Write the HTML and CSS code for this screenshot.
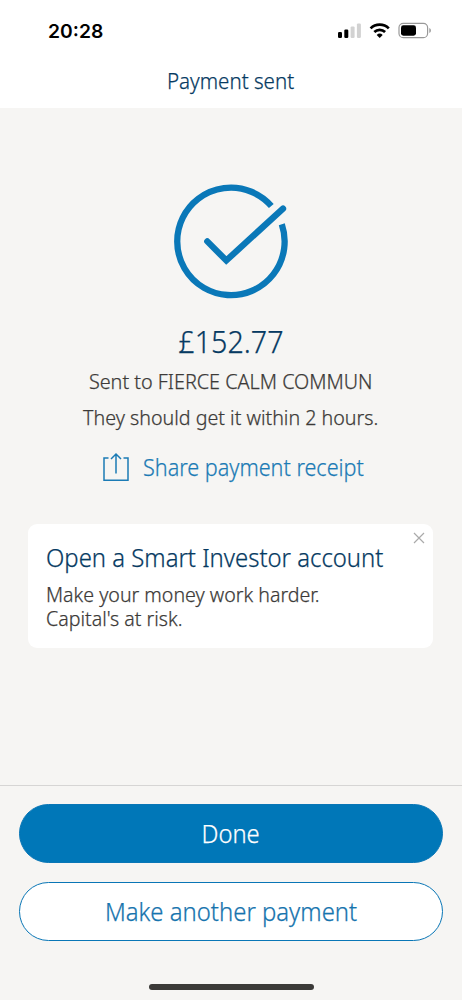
FILE: index.html
```html
<!DOCTYPE html>
<html lang="en">
<head>
<meta charset="utf-8">
<title>Payment sent</title>
<link rel="stylesheet" href="styles.css">
</head>
<body>
<div class="screen">
  <header class="header">
    <div class="status">
      <span class="time">20:28</span>
      <svg class="status-icons" width="96" height="20" viewBox="0 0 96 20">
        <rect x="2" y="12" width="4" height="6" rx="1.2"/>
        <rect x="8.3" y="9.6" width="4" height="8.4" rx="1.2"/>
        <rect class="dim" x="14.6" y="6.4" width="4" height="11.6" rx="1.2"/>
        <rect class="dim" x="20.9" y="3.4" width="4" height="14.6" rx="1.2"/>
        <path class="wave" d="M34.6 8.4a13 13 0 0 1 18.2 0M38.3 12a7.8 7.8 0 0 1 10.8 0"/>
        <path d="M43.7 18l-3-3.1a4.4 4.4 0 0 1 6 0z"/>
        <rect class="shell" x="63" y="3.4" width="28.6" height="14.2" rx="4.2"/>
        <rect x="65" y="5.3" width="15" height="10.4" rx="2.4"/>
        <path class="nub" d="M93.3 8v5c1.1-.4 1.6-1.4 1.6-2.5S94.4 8.4 93.3 8z"/>
      </svg>
    </div>
    <h1 class="title"><span class="fit fit-title">Payment sent</span></h1>
  </header>
  <main class="main">
    <svg class="tick" width="120" height="120" viewBox="0 0 120 120">
      <path d="M100.300 24A53.700 53.700 0 1 0 110.800 42.200"/>
      <path class="check" d="M36.300 59.400L55.300 78.500L112 26.600"/>
    </svg>
    <p class="amount"><span class="fit fit-amount">£152.77</span></p>
    <p class="detail"><span class="fit fit-sent">Sent to FIERCE CALM COMMUN</span></p>
    <p class="detail"><span class="fit fit-eta">They should get it within 2 hours.</span></p>
    <a class="share">
      <svg width="28" height="30" viewBox="0 0 28 30">
        <path d="M6.5 6H2v22.200h24V6h-4.500M14 21.500V2M9 7l5-5 5 5"/>
      </svg>
      <span class="fit fit-share">Share payment receipt</span>
    </a>
    <section class="card">
      <svg class="close" width="12" height="12" viewBox="0 0 12 12"><path d="M1 1l10 10M11 1L1 11"/></svg>
      <h2 class="card-title"><span class="fit fit-card">Open a Smart Investor account</span></h2>
      <p class="card-text"><span class="fit fit-copy">Make your money work harder.<br>Capital's at risk.</span></p>
    </section>
  </main>
  <footer class="footer">
    <button class="button primary"><span class="fit fit-done">Done</span></button>
    <button class="button secondary"><span class="fit fit-another">Make another payment</span></button>
    <div class="home"></div>
  </footer>
</div>
</body>
</html>
```
FILE: styles.css
```css
* { box-sizing: border-box; margin: 0; padding: 0; }
body { background: #f6f5f3; font-family: "Noto Sans", "Open Sans", sans-serif; font-weight: 300; }
.screen { display: flex; flex-direction: column; width: 462px; height: 1000px; overflow: hidden; color: #3c3a38; }

.fit { display: inline-block; white-space: nowrap; -webkit-text-stroke: .25px currentColor; }
.fit-title { transform: scaleX(.955); }
.fit-amount { transform: scaleX(.925); }
.fit-sent { transform: scaleX(.98); }
.fit-eta { transform: scaleX(.973); }
.fit-share { transform: scaleX(.938); transform-origin: left; }
.fit-card { transform: scaleX(.955); transform-origin: left; }
.fit-copy { transform: scaleX(.97); transform-origin: left; }
.fit-done { transform: scaleX(.95); }
.fit-another { transform: scaleX(.955); }

.header { height: 108px; background: #fff; }
.status { display: flex; justify-content: space-between; align-items: flex-start; height: 58px; padding: 20px 30px 0 48px; }
.time { font: 600 19.3px/22px Inter, sans-serif; color: #000; }
.status-icons .dim { fill: #d2d2d2; }
.status-icons .wave { fill: none; stroke: #000; stroke-width: 2.7; }
.status-icons .shell { fill: none; stroke: #999; stroke-width: 1.2; }
.status-icons .nub { fill: #999; }
.title { font-size: 21.5px; font-weight: 300; line-height: 45px; text-align: center; color: #063a62; }
.main { display: flex; flex-direction: column; align-items: center; height: 677px; padding-top: 74px; }
.tick { fill: none; stroke: #0a78b8; stroke-width: 6.3; }
.check { stroke-linecap: round; }
.amount { margin-top: 19px; margin-bottom: 2px; font-size: 31px; line-height: 40px; color: #063a62; }
.detail { font-size: 20.2px; line-height: 36px; }
.share { display: flex; align-items: center; gap: 13px; width: 258px; margin-top: 14px; font-size: 23px; line-height: 36px; color: #1b7bb5; }
.share svg { flex: none; fill: none; stroke: #1b7bb5; stroke-width: 1.5; }
.card { position: relative; width: 405px; height: 124px; margin-top: 39px; margin-right: 1px; padding: 16px 18px; border-radius: 9px; background: #fff; }
.close { position: absolute; top: 8px; right: 8px; fill: none; stroke: #aaa; stroke-width: 1.2; }
.card-title { margin-bottom: 8px; font-size: 25px; font-weight: 300; line-height: 34px; color: #063a62; }
.card-text { font-size: 20.2px; line-height: 24px; }
.footer { display: flex; flex-direction: column; align-items: center; height: 215px; padding-top: 18px; border-top: 1px solid #d6d5d4; }
.button { width: 424px; height: 59px; border: 1px solid #0976b6; border-radius: 30px; font: 300 25px/57px "Noto Sans", sans-serif; }
.primary { background: #0077b8; color: #fff; }
.secondary { margin-top: 19px; background: #fff; color: #1674ae; }
.home { width: 165px; height: 6px; margin-top: 43px; border-radius: 3px; background: #3b3a38; }
```
